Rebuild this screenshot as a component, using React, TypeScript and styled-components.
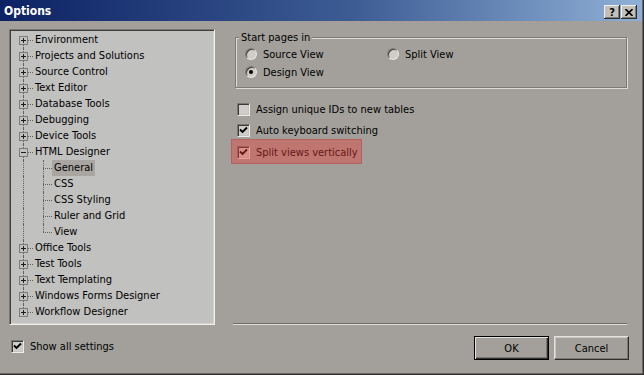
import React from 'react'
import styled, { createGlobalStyle } from 'styled-components'

const FACE = '#a3a09b'
const FONT = '"DejaVu Sans Condensed", "Liberation Sans", Tahoma, sans-serif'

interface TreeNode {
  label: string
  children?: string[]
}

const TREE: TreeNode[] = [
  { label: 'Environment' },
  { label: 'Projects and Solutions' },
  { label: 'Source Control' },
  { label: 'Text Editor' },
  { label: 'Database Tools' },
  { label: 'Debugging' },
  { label: 'Device Tools' },
  { label: 'HTML Designer', children: ['General', 'CSS', 'CSS Styling', 'Ruler and Grid', 'View'] },
  { label: 'Office Tools' },
  { label: 'Test Tools' },
  { label: 'Text Templating' },
  { label: 'Windows Forms Designer' },
  { label: 'Workflow Designer' },
]

const GlobalStyle = createGlobalStyle`
  html, body {
    margin: 0;
    padding: 0;
  }
  body {
    width: 644px;
    height: 375px;
    overflow: hidden;
    background: ${FACE};
    font-family: ${FONT};
    font-size: 11px;
    color: #000;
  }
`

const Window = styled.div`
  width: 644px;
  height: 375px;
  box-sizing: border-box;
  display: flex;
  flex-direction: column;
  background: ${FACE};
  border-right: 1px solid #2f2e2c;
  border-bottom: 1px solid #2f2e2c;
  box-shadow: inset -1px -1px 0 #6c6965;
`

const TitleBar = styled.div`
  height: 21px;
  flex-shrink: 0;
  display: flex;
  align-items: center;
  padding: 0 5px 0 4px;
  margin-right: 1px;
  background: linear-gradient(to right, #0c2264 0%, #3d5c94 55%, #8fb0d6 100%);
`

const Title = styled.div`
  flex: 1;
  color: #fff;
  font-weight: bold;
  font-size: 12px;
`

const TitleButtons = styled.div`
  display: flex;
  gap: 1px;
  margin-top: 3px;
`

const TitleButton = styled.div`
  width: 16px;
  height: 14px;
  box-sizing: border-box;
  display: flex;
  align-items: center;
  justify-content: center;
  background: #c3c0ba;
  font-weight: bold;
  font-size: 11px;
  line-height: 1;
  box-shadow: inset -1px -1px 0 #2f2e2c, inset 1px 1px 0 #f2f0ec, inset -2px -2px 0 #7f7c77;
`

const Body = styled.div`
  flex: 1;
  display: grid;
  grid-template-columns: 206px 1fr;
  grid-template-rows: 296px auto;
  column-gap: 18px;
  padding: 8px 14px 0 9px;
`

const TreePanel = styled.div`
  box-sizing: border-box;
  background: #c1c1bf;
  border: 1px solid;
  border-color: #7a7772 #f0eee9 #f0eee9 #7a7772;
  box-shadow: inset 1px 1px 0 #3f3e3b, inset -1px -1px 0 #d6d4d0;
  padding: 2px 1px 1px;
  overflow: hidden;
`

const Row = styled.div<{ $first?: boolean; $last?: boolean; $child?: boolean; $lastChild?: boolean }>`
  position: relative;
  height: 16px;
  display: flex;
  align-items: center;
  padding-left: ${({ $child }) => ($child ? 32 : 8)}px;
  white-space: nowrap;

  &::before {
    content: '';
    position: absolute;
    left: 12px;
    top: ${({ $first }) => ($first ? 8 : 0)}px;
    bottom: ${({ $last }) => ($last ? 8 : 0)}px;
    border-left: 1px dotted #5f5f5d;
  }

  &::after {
    content: '';
    display: ${({ $child }) => ($child ? 'block' : 'none')};
    position: absolute;
    left: 32px;
    top: 0;
    bottom: ${({ $lastChild }) => ($lastChild ? 8 : 0)}px;
    border-left: 1px dotted #5f5f5d;
  }
`

const Expander = styled.span<{ $open?: boolean }>`
  position: relative;
  z-index: 1;
  width: 9px;
  height: 9px;
  box-sizing: border-box;
  border: 1px solid #7c7c7a;
  background: #c1c1bf;
  flex-shrink: 0;

  &::before {
    content: '';
    position: absolute;
    left: 1px;
    top: 3px;
    width: 5px;
    height: 1px;
    background: #1e1e1e;
  }

  &::after {
    content: '';
    display: ${({ $open }) => ($open ? 'none' : 'block')};
    position: absolute;
    left: 3px;
    top: 1px;
    width: 1px;
    height: 5px;
    background: #1e1e1e;
  }
`

const Connector = styled.span<{ $width: number }>`
  width: ${({ $width }) => $width}px;
  border-top: 1px dotted #5f5f5d;
  margin-right: 1px;
  flex-shrink: 0;
`

const Label = styled.span<{ $selected?: boolean }>`
  line-height: 16px;
  padding: 0 2px;
  margin-left: -1px;
  background: ${({ $selected }) => ($selected ? '#a9a6a1' : 'transparent')};
`

const RightPanel = styled.div`
  display: flex;
  flex-direction: column;
`

const GroupBox = styled.fieldset`
  margin: 2px 2px 0 2px;
  padding: 1px 9px 6px 9px;
  border: 1px solid #7d7a75;
  box-shadow: inset 1px 1px 0 #dedbd6, 1px 1px 0 #dedbd6;
`

const Legend = styled.legend`
  padding: 0 2px;
  margin-left: -6px;
  line-height: 13px;
  background: ${FACE};
  position: relative;
`

const RadioGrid = styled.div`
  display: grid;
  grid-template-columns: 142px auto;
  grid-auto-rows: 18px;
`

const Option = styled.label`
  display: flex;
  align-items: center;
  gap: 6px;
  white-space: nowrap;
`

const Radio = styled.span<{ $checked?: boolean }>`
  width: 12px;
  height: 12px;
  box-sizing: border-box;
  border-radius: 50%;
  border: 1px solid;
  border-color: #7d7a75 #e6e4e0 #e6e4e0 #7d7a75;
  background: #cfcdca;
  box-shadow: inset 1px 1px 0 #3f3e3b;
  display: flex;
  align-items: center;
  justify-content: center;
  flex-shrink: 0;

  &::after {
    content: '';
    display: ${({ $checked }) => ($checked ? 'block' : 'none')};
    width: 4px;
    height: 4px;
    border-radius: 50%;
    background: #000;
  }
`

const CheckList = styled.div`
  margin-top: 11px;
  display: flex;
  flex-direction: column;
`

const CheckRow = styled.label<{ $marked?: boolean }>`
  position: relative;
  height: 21px;
  display: flex;
  align-items: center;
  gap: 6px;
  padding-left: 4px;
  white-space: nowrap;

  &:last-child {
    margin-top: 1px;
  }

  &::after {
    content: '';
    display: ${({ $marked }) => ($marked ? 'block' : 'none')};
    position: absolute;
    left: -2px;
    top: -3px;
    bottom: -1px;
    width: 131px;
    background: rgba(232, 58, 52, 0.42);
    box-shadow: inset 0 0 0 1px rgba(150, 40, 40, 0.25);
  }
`

const Box = styled.span`
  width: 13px;
  height: 13px;
  box-sizing: border-box;
  display: flex;
  align-items: center;
  justify-content: center;
  flex-shrink: 0;
  background: #cfcdca;
  border: 1px solid;
  border-color: #7a7772 #eeece8 #eeece8 #7a7772;
  box-shadow: inset 1px 1px 0 #3a3937, inset -1px -1px 0 #c6c3be;
`

const Separator = styled.div`
  margin: auto 2px 0 0;
  height: 0;
  border-top: 1px solid #6f6c68;
  border-bottom: 1px solid #e2dfda;
`

const Footer = styled.div`
  padding: 15px 0 0 2px;
`

const Buttons = styled.div`
  display: flex;
  justify-content: flex-end;
  gap: 5px;
  padding-top: 11px;
`

const Button = styled.button<{ $default?: boolean }>`
  width: 75px;
  height: 24px;
  padding: 0;
  font: inherit;
  color: #000;
  background: ${FACE};
  border: 1px solid;
  border-color: ${({ $default }) => ($default ? '#000' : '#e4e2de #2f2e2c #2f2e2c #e4e2de')};
  box-shadow: ${({ $default }) =>
    $default
      ? 'inset 1px 1px 0 #e4e2de, inset -1px -1px 0 #2f2e2c, inset -2px -2px 0 #7b7873'
      : 'inset -1px -1px 0 #7b7873, inset 1px 1px 0 #c9c6c1'};
`

const CheckMark: React.FC = () => (
  <svg width="9" height="9" viewBox="0 0 9 9">
    <path d="M1 3.5 L3.5 6 L8 1.5" fill="none" stroke="#000" strokeWidth="1.9" />
  </svg>
)

const CheckBox: React.FC<{ checked?: boolean }> = ({ checked }) => (
  <Box>{checked && <CheckMark />}</Box>
)

const OptionsTree: React.FC = () => (
  <TreePanel>
    {TREE.map((node, i) => (
      <React.Fragment key={node.label}>
        <Row $first={i === 0} $last={i === TREE.length - 1}>
          <Expander $open={!!node.children} />
          <Connector $width={5} />
          <Label>{node.label}</Label>
        </Row>
        {node.children?.map((child, j) => (
          <Row key={child} $child $lastChild={j === node.children!.length - 1}>
            <Connector $width={9} />
            <Label $selected={child === 'General'}>{child}</Label>
          </Row>
        ))}
      </React.Fragment>
    ))}
  </TreePanel>
)

export default function App() {
  return (
    <>
      <GlobalStyle />
      <Window>
        <TitleBar>
          <Title>Options</Title>
          <TitleButtons>
            <TitleButton>?</TitleButton>
            <TitleButton>
              <svg width="8" height="7" viewBox="0 0 8 7">
                <path d="M0.5 0 L7.5 7 M7.5 0 L0.5 7" stroke="#000" strokeWidth="1.6" />
              </svg>
            </TitleButton>
          </TitleButtons>
        </TitleBar>
        <Body>
          <OptionsTree />
          <RightPanel>
            <GroupBox>
              <Legend>Start pages in</Legend>
              <RadioGrid>
                <Option><Radio />Source View</Option>
                <Option><Radio />Split View</Option>
                <Option><Radio $checked />Design View</Option>
              </RadioGrid>
            </GroupBox>
            <CheckList>
              <CheckRow><CheckBox />Assign unique IDs to new tables</CheckRow>
              <CheckRow><CheckBox checked />Auto keyboard switching</CheckRow>
              <CheckRow $marked><CheckBox checked />Split views vertically</CheckRow>
            </CheckList>
            <Separator />
          </RightPanel>
          <Footer>
            <Option><CheckBox checked />Show all settings</Option>
          </Footer>
          <Buttons>
            <Button $default>OK</Button>
            <Button>Cancel</Button>
          </Buttons>
        </Body>
      </Window>
    </>
  )
}
